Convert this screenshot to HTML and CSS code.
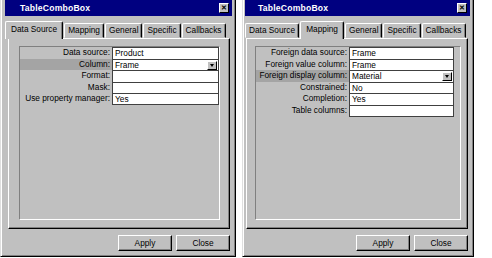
FILE: index.html
```html
<!DOCTYPE html>
<html lang="en">
<head>
    <meta charset="UTF-8">
    <title>TableComboBox</title>
    <link rel="stylesheet" href="styles.css">
</head>
<body>
    <div class="desk">
        <!-- Data Source page -->
        <div class="window win-left">
            <div class="titlebar">
                <span class="title">TableComboBox</span>
                <span class="close">&#x2715;</span>
            </div>
            <div class="tabs">
                <div class="tab active">Data Source</div>
                <div class="tab">Mapping</div>
                <div class="tab">General</div>
                <div class="tab">Specific</div>
                <div class="tab">Callbacks</div>
            </div>
            <div class="panel">
                <div class="group">
                    <div class="form">
                        <div class="label">Data source:</div>
                        <div class="field">Product</div>
                        <div class="label selected">Column:</div>
                        <div class="field combo">Frame<span class="drop"></span></div>
                        <div class="label">Format:</div>
                        <div class="field"></div>
                        <div class="label">Mask:</div>
                        <div class="field"></div>
                        <div class="label">Use property manager:</div>
                        <div class="field">Yes</div>
                    </div>
                </div>
            </div>
            <div class="buttons">
                <button class="btn">Apply</button>
                <button class="btn">Close</button>
            </div>
        </div>

        <!-- Mapping page -->
        <div class="window win-right">
            <div class="titlebar">
                <span class="title">TableComboBox</span>
                <span class="close">&#x2715;</span>
            </div>
            <div class="tabs">
                <div class="tab">Data Source</div>
                <div class="tab active">Mapping</div>
                <div class="tab">General</div>
                <div class="tab">Specific</div>
                <div class="tab">Callbacks</div>
            </div>
            <div class="panel">
                <div class="group">
                    <div class="form">
                        <div class="label">Foreign data source:</div>
                        <div class="field">Frame</div>
                        <div class="label">Foreign value column:</div>
                        <div class="field">Frame</div>
                        <div class="label selected">Foreign display column:</div>
                        <div class="field combo">Material<span class="drop"></span></div>
                        <div class="label">Constrained:</div>
                        <div class="field">No</div>
                        <div class="label">Completion:</div>
                        <div class="field">Yes</div>
                        <div class="label">Table columns:</div>
                        <div class="field"></div>
                    </div>
                </div>
            </div>
            <div class="buttons">
                <button class="btn">Apply</button>
                <button class="btn">Close</button>
            </div>
        </div>
    </div>
</body>
</html>
```

FILE: styles.css
```css
body {
    margin: 0;
    background: #ffffff;
    font-family: "Liberation Sans", Arial, sans-serif;
    font-size: 8.3px;
    color: #000;
}

.desk {
    display: flex;
    gap: 6px;
    height: 258px;
    overflow: hidden;
}

/* Window frame */
.window {
    box-sizing: border-box;
    height: 257px;
    background: #c0c0c0;
    border-left: 1px solid #dfdfdf;
    border-right: 1px solid #000;
    border-bottom: 1px solid #000;
    box-shadow: inset 1px 0 0 #fff, inset -1px -1px 0 #808080;
    padding: 0 3px 3px 3px;
    display: flex;
    flex-direction: column;
}

.win-left {
    width: 236px;
    padding-left: 4px;
}

.win-right {
    width: 232px;
    padding-left: 2px;
}

.titlebar {
    height: 16px;
    background: #000080;
    display: flex;
    align-items: center;
    justify-content: space-between;
    padding: 0 3px 0 15px;
}

.win-right .titlebar {
    padding-left: 13px;
}

.title {
    color: #fff;
    font-weight: bold;
    font-size: 8.6px;
    letter-spacing: 0.2px;
}

.close {
    box-sizing: border-box;
    width: 10px;
    height: 10px;
    background: #c0c0c0;
    border: 1px solid;
    border-color: #fff #000 #000 #fff;
    font-size: 7px;
    font-weight: bold;
    line-height: 8px;
    text-align: center;
}

/* Tabs */
.tabs {
    display: flex;
    align-items: flex-end;
    margin-top: 5px;
    height: 17px;
    position: relative;
    z-index: 1;
}

.tab {
    flex-shrink: 0;
    box-sizing: border-box;
    height: 15px;
    padding: 0 3px;
    line-height: 13px;
    white-space: nowrap;
    border: 1px solid;
    border-color: #fff #000 transparent #fff;
    box-shadow: inset -1px 0 0 #808080;
    border-radius: 2px 2px 0 0;
    margin-right: 1px;
}

.tab.active {
    height: 18px;
    margin-bottom: -1px;
    background: #c0c0c0;
    padding: 0 5px;
    line-height: 14px;
    border-bottom: none;
}

/* Tab page */
.panel {
    box-sizing: border-box;
    height: 191px;
    margin: 0 2px 0 3px;
    border: 1px solid;
    border-color: #fff #000 #000 #fff;
    box-shadow: inset -1px -1px 0 #808080;
    padding: 7px 9px 8px 10px;
}

.win-right .panel {
    margin-left: 1px;
    padding-left: 8px;
    padding-right: 6px;
}

.group {
    box-sizing: border-box;
    height: 100%;
    border: 1px solid;
    border-color: #808080 #fff #fff #808080;
}

.form {
    display: grid;
    grid-template-columns: 92px 107px;
    grid-auto-rows: 11.6px;
}

.win-right .form {
    grid-template-columns: 93px 105px;
}

.label {
    text-align: right;
    padding-right: 2px;
    line-height: 11px;
    white-space: nowrap;
}

.label.selected {
    background: #a4a4a4;
}

.field {
    position: relative;
    box-sizing: border-box;
    background: #fff;
    border-left: 1px solid #404040;
    border-top: 1px solid #404040;
    border-right: 1px solid #404040;
    padding-left: 2px;
    line-height: 10px;
}

.form .field:last-child {
    border-bottom: 1px solid #404040;
}

.drop {
    position: absolute;
    right: 1px;
    top: 1px;
    box-sizing: border-box;
    width: 10px;
    height: 9px;
    background: #c0c0c0;
    border: 1px solid;
    border-color: #fff #000 #000 #fff;
}

.drop::after {
    content: "";
    position: absolute;
    left: 2px;
    top: 2px;
    border-left: 2.5px solid transparent;
    border-right: 2.5px solid transparent;
    border-top: 3px solid #000;
}

/* Dialog buttons */
.buttons {
    display: flex;
    justify-content: flex-end;
    gap: 4px;
    margin-top: 6px;
    padding-right: 2px;
}

.btn {
    box-sizing: border-box;
    width: 54px;
    height: 16px;
    background: #c0c0c0;
    border: 1px solid;
    border-color: #fff #000 #000 #fff;
    box-shadow: inset -1px -1px 0 #808080;
    font-family: inherit;
    font-size: 8.3px;
    padding: 0;
    color: #000;
}
```
